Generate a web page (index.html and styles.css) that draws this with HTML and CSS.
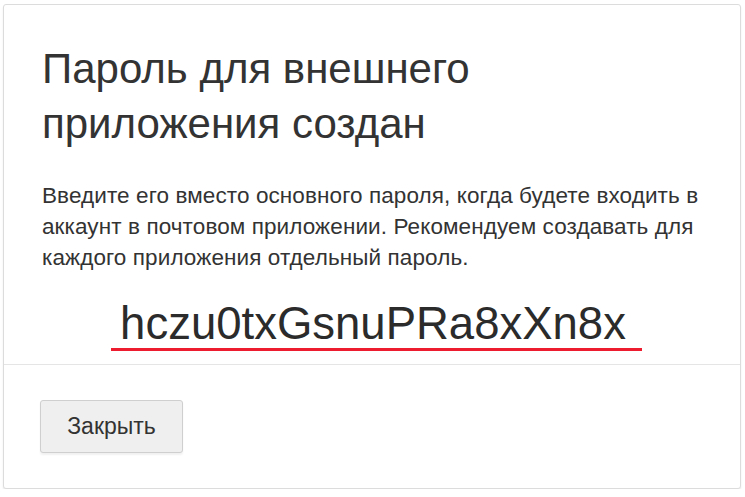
FILE: index.html
```html
<!DOCTYPE html>
<html lang="ru">
<head>
<meta charset="utf-8">
<title>Пароль для внешнего приложения создан</title>
<link rel="stylesheet" href="styles.css">
</head>
<body>
<div class="modal">
  <div class="modal-body">
    <h1 class="title">Пароль для внешнего приложения создан</h1>
    <p class="text">Введите его вместо основного пароля, когда будете входить в аккаунт в почтовом приложении. Рекомендуем создавать для каждого приложения отдельный пароль.</p>
    <div class="password-row"><span class="password">hczu0txGsnuPRa8xXn8x</span></div>
  </div>
  <div class="modal-footer">
    <button class="btn" type="button">Закрыть</button>
  </div>
</div>
</body>
</html>
```

FILE: styles.css
```css
html, body {
  margin: 0;
  padding: 0;
  background: #ffffff;
}
body {
  padding: 4px 4px 0 3px;
  font-family: "Liberation Sans", Arial, sans-serif;
  color: #333333;
}
.modal {
  border: 1px solid #dcdcdc;
  border-radius: 3px;
  box-shadow: 0 2px 2px rgba(0, 0, 0, 0.08);
  background: #ffffff;
  width: 738px;
  box-sizing: border-box;
}
.modal-body {
  padding: 36px 38px 13px 38px;
}
.title {
  margin: 0 0 29px 0;
  font-size: 42px;
  line-height: 55px;
  font-weight: normal;
  color: #333333;
  width: 500px;
}
.text {
  margin: 0 0 26px 0;
  font-size: 22.5px;
  letter-spacing: 0.1px;
  line-height: 31px;
  color: #333333;
}
.password-row {
  text-align: center;
  padding-left: 9px;
}
.password {
  display: inline-block;
  font-size: 45.5px;
  line-height: 49px;
  padding: 0 16px 0 9px;
  border-bottom: 3px solid #ed1c2e;
  color: #2b2b2b;
}
.modal-footer {
  border-top: 1px solid #e5e5e5;
  padding: 35px 38px 35px 36px;
}
.btn {
  width: 143px;
  height: 53px;
  background: #efefef;
  border: 1px solid #cfcfcf;
  border-radius: 3px;
  box-shadow: 0 2px 2px rgba(0, 0, 0, 0.06);
  font-family: "Liberation Sans", Arial, sans-serif;
  font-size: 23px;
  color: #333333;
  padding: 0;
  cursor: pointer;
}
```
